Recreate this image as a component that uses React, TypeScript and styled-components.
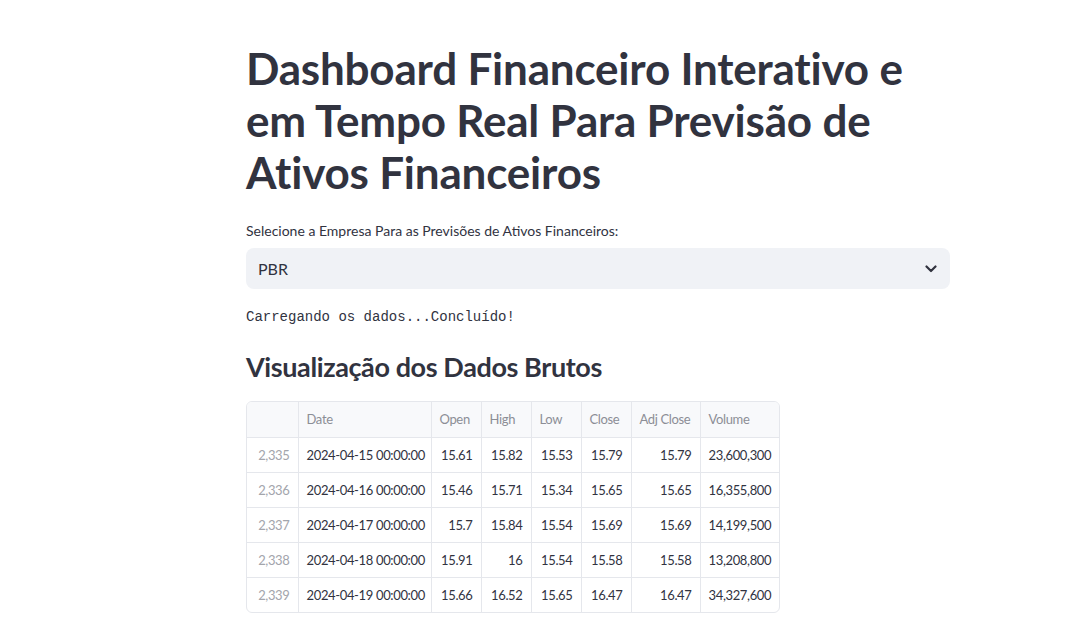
import React from "react";
import styled, { createGlobalStyle } from "styled-components";

const Global = createGlobalStyle`
  html, body { margin: 0; padding: 0; background: #ffffff; }
  body { font-family: "Lato", "Noto Sans", sans-serif; color: #31333f; }
`;

const Page = styled.main`
  display: flex;
  justify-content: flex-start;
  padding: 42px 0 0 246px;
`;

const Column = styled.div`
  width: 704px;
  display: flex;
  flex-direction: column;
`;

const Title = styled.h1`
  margin: 0;
  font-family: "Lato", "Noto Sans", sans-serif;
  font-weight: 700;
  font-size: 44px;
  line-height: 52px;
  color: #31333f;
  letter-spacing: -0.2px;
  white-space: nowrap;
`;

const Field = styled.div`
  display: flex;
  flex-direction: column;
  margin-top: 24px;
`;

const Label = styled.label`
  font-size: 14px;
  line-height: 18px;
  color: #31333f;
  margin-bottom: 8px;
`;

const Select = styled.div`
  height: 41px;
  box-sizing: border-box;
  background: #f0f2f6;
  border-radius: 8px;
  display: flex;
  align-items: center;
  justify-content: space-between;
  padding: 0 13px 0 12px;
  font-size: 16px;
  color: #31333f;
`;

const Mono = styled.div`
  margin-top: 19px;
  font-family: "Liberation Mono", "DejaVu Sans Mono", monospace;
  font-size: 14px;
  line-height: 18px;
  color: #31333f;
`;

const Subtitle = styled.h2`
  margin: 23px 0 0;
  font-family: "Lato", "Noto Sans", sans-serif;
  font-weight: 700;
  font-size: 27px;
  line-height: 36px;
  letter-spacing: -0.4px;
  color: #31333f;
`;

const TableWrap = styled.div`
  margin-top: 16px;
  width: 532px;
  border: 1px solid #e5e7ec;
  border-radius: 6px;
  overflow: hidden;
`;

const Table = styled.table`
  border-collapse: collapse;
  table-layout: fixed;
  width: 532px;
  font-family: "Lato", "Noto Sans", sans-serif;
  font-size: 13px;
  letter-spacing: -0.35px;
`;

const Th = styled.th<{ $w: number }>`
  box-sizing: border-box;
  width: ${(p) => p.$w}px;
  height: 35px;
  padding: 0 8px;
  background: #f8f9fb;
  color: #8c8e96;
  font-weight: 400;
  text-align: left;
  border-left: 1px solid #e5e7ec;
  border-bottom: 1px solid #e5e7ec;
  white-space: nowrap;
  overflow: hidden;
  &:first-child { border-left: none; }
`;

const Td = styled.td<{ $index?: boolean; $align?: string }>`
  box-sizing: border-box;
  height: 35px;
  padding: 0 8px;
  text-align: ${(p) => p.$align || "right"};
  color: ${(p) => (p.$index ? "#a3a5ac" : "#31333f")};
  border-left: 1px solid #e5e7ec;
  border-top: 1px solid #e5e7ec;
  white-space: nowrap;
  overflow: hidden;
  &:first-child { border-left: none; }
`;

const cols: [string, number][] = [
  ["", 51],
  ["Date", 133],
  ["Open", 50],
  ["High", 50],
  ["Low", 50],
  ["Close", 50],
  ["Adj Close", 69],
  ["Volume", 79],
];

const rows = [
  ["2,335", "2024-04-15 00:00:00", "15.61", "15.82", "15.53", "15.79", "15.79", "23,600,300"],
  ["2,336", "2024-04-16 00:00:00", "15.46", "15.71", "15.34", "15.65", "15.65", "16,355,800"],
  ["2,337", "2024-04-17 00:00:00", "15.7", "15.84", "15.54", "15.69", "15.69", "14,199,500"],
  ["2,338", "2024-04-18 00:00:00", "15.91", "16", "15.54", "15.58", "15.58", "13,208,800"],
  ["2,339", "2024-04-19 00:00:00", "15.66", "16.52", "15.65", "16.47", "16.47", "34,327,600"],
];

const Chevron = () => (
  <svg width="12" height="8" viewBox="0 0 12 8">
    <path d="M1.5 1.5 L6 6 L10.5 1.5" fill="none" stroke="#31333f" strokeWidth="2.2" strokeLinecap="round" strokeLinejoin="round" />
  </svg>
);

export default function App() {
  return (
    <>
      <Global />
      <Page>
        <Column>
          <Title>
            Dashboard Financeiro Interativo e<br />
            em Tempo Real Para Previsão de<br />
            Ativos Financeiros
          </Title>
          <Field>
            <Label>Selecione a Empresa Para as Previsões de Ativos Financeiros:</Label>
            <Select>
              <span>PBR</span>
              <Chevron />
            </Select>
          </Field>
          <Mono>Carregando os dados...Concluído!</Mono>
          <Subtitle>Visualização dos Dados Brutos</Subtitle>
          <TableWrap>
            <Table>
              <thead>
                <tr>
                  {cols.map(([n, w], i) => (
                    <Th key={i} $w={w}>{n}</Th>
                  ))}
                </tr>
              </thead>
              <tbody>
                {rows.map((r, ri) => (
                  <tr key={ri}>
                    {r.map((c, ci) => (
                      <Td key={ci} $index={ci === 0} $align={ci === 1 ? "left" : "right"}>{c}</Td>
                    ))}
                  </tr>
                ))}
              </tbody>
            </Table>
          </TableWrap>
        </Column>
      </Page>
    </>
  );
}
